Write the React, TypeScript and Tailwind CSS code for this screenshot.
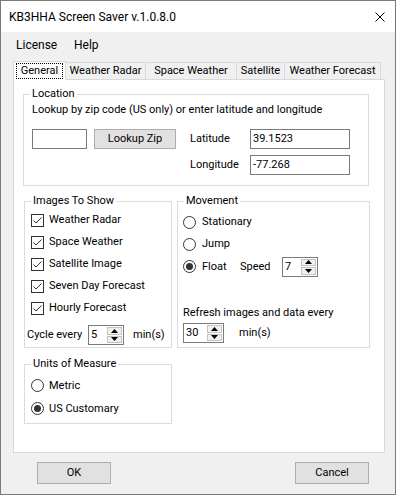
import React from 'react'

function CheckBox({ label }: { label: string }) {
  return (
    <div className="flex h-[22px] items-center pl-[6px]">
      <div className="flex h-[13px] w-[13px] items-center justify-center border border-[#333] bg-white">
        <svg width="11" height="11" viewBox="0 0 11 11">
          <path d="M1.5 5.5 L4 8 L9.5 2.5" fill="none" stroke="#333" strokeWidth="1" />
        </svg>
      </div>
      <span className="ml-[5px]">{label}</span>
    </div>
  )
}

function Radio({ checked }: { checked?: boolean }) {
  return (
    <div className="flex h-[13px] w-[13px] shrink-0 items-center justify-center rounded-full border border-[#333] bg-white">
      {checked && <div className="h-[7px] w-[7px] rounded-full bg-[#333]" />}
    </div>
  )
}

function Spinner({ value, width }: { value: string; width: string }) {
  return (
    <div className={`flex h-[20px] shrink-0 border border-[#7a7a7a] bg-white ${width}`}>
      <span className="flex-1 pl-[2px] leading-[18px]">{value}</span>
      <div className="m-px flex w-[15px] flex-col gap-px">
        <div className="flex flex-1 items-center justify-center border border-[#c4c4c4] bg-[#f0f0f0]">
          <svg width="7" height="4" viewBox="0 0 7 4">
            <path d="M0 4 L3.5 0 L7 4 Z" fill="#000" />
          </svg>
        </div>
        <div className="flex flex-1 items-center justify-center border border-[#c4c4c4] bg-[#f0f0f0]">
          <svg width="7" height="4" viewBox="0 0 7 4">
            <path d="M0 0 L3.5 4 L7 0 Z" fill="#000" />
          </svg>
        </div>
      </div>
    </div>
  )
}

function TextBox({ value, width }: { value?: string; width: string }) {
  return (
    <div className={`h-[20px] shrink-0 border border-[#7a7a7a] bg-white pl-[2px] leading-[18px] ${width}`}>
      {value}
    </div>
  )
}

function Group({
  title,
  className,
  children,
}: {
  title: string
  className: string
  children: React.ReactNode
}) {
  return (
    <fieldset className={`m-0 min-w-0 border border-[#dcdcdc] p-0 ${className}`}>
      <legend className="ml-[6px] px-[2px] leading-[16px]">{title}</legend>
      {children}
    </fieldset>
  )
}

const tabs = [
  { name: 'Weather Radar', w: 'w-[81px]' },
  { name: 'Space Weather', w: 'w-[92px]' },
  { name: 'Satellite', w: 'w-[49px]' },
  { name: 'Weather Forecast', w: 'w-[97px]' },
]

export default function App() {
  return (
    <div className="flex h-[495px] w-[396px] flex-col whitespace-nowrap border border-[#7a7a7a] bg-[#f0f0f0] font-['Roboto',Arial,sans-serif] text-[11px] leading-[16px] text-black">
      {/* title bar */}
      <div className="flex h-[31px] items-center justify-between bg-white pl-[8px] pr-[10px]">
        <span className="text-[12px]">KB3HHA Screen Saver v.1.0.8.0</span>
        <svg width="10" height="10" viewBox="0 0 10 10">
          <path d="M0.5 0.5 L9.5 9.5 M9.5 0.5 L0.5 9.5" stroke="#000" strokeWidth="1" />
        </svg>
      </div>

      {/* menu */}
      <div className="flex h-[25px] items-center pl-[15px] text-[12px]">
        <span className="w-[58px]">License</span>
        <span>Help</span>
      </div>

      {/* tabs */}
      <div className="mt-[4px] flex h-[18px] items-end pl-[12px]">
        <div className="relative z-10 -mb-px flex h-[19px] w-[53px] items-start justify-center border border-b-0 border-[#d9d9d9] bg-white pt-px">
          <span className="border border-dotted border-black px-[4px] leading-[14px]">General</span>
        </div>
        {tabs.map((t) => (
          <div
            key={t.name}
            className={`-ml-px flex h-[17px] items-center justify-center border border-b-0 border-[#d9d9d9] bg-[#f0f0f0] ${t.w}`}
          >
            {t.name}
          </div>
        ))}
      </div>

      {/* tab panel */}
      <div className="ml-[12px] flex h-[374px] w-[372px] flex-col border border-[#d9d9d9] bg-white">
        <Group title="Location" className="ml-[9px] mt-[6px] w-[346px] pb-[10px]">
          <div className="pl-[8px]">Lookup by zip code (US only) or enter latitude and longitude</div>
          <div className="mt-[11px] flex items-start pl-[8px]">
            <TextBox width="w-[55px]" />
            <div className="ml-[7px] flex h-[20px] w-[82px] items-center justify-center border border-[#adadad] bg-[#e1e1e1]">
              Lookup Zip
            </div>
            <div className="ml-[14px] flex flex-col gap-[6px]">
              <div className="flex h-[20px] items-center">
                <span className="w-[60px]">Latitude</span>
                <TextBox value="39.1523" width="w-[100px]" />
              </div>
              <div className="flex h-[20px] items-center">
                <span className="w-[60px]">Longitude</span>
                <TextBox value="-77.268" width="w-[100px]" />
              </div>
            </div>
          </div>
        </Group>

        <div className="mt-[7px] flex">
          <Group title="Images To Show" className="ml-[10px] w-[148px] pb-[2px]">
            <CheckBox label="Weather Radar" />
            <CheckBox label="Space Weather" />
            <CheckBox label="Satellite Image" />
            <CheckBox label="Seven Day Forecast" />
            <CheckBox label="Hourly Forecast" />
            <div className="mt-[6px] flex h-[20px] items-center pl-[2px]">
              <span className="w-[61px]">Cycle every</span>
              <Spinner value="5" width="w-[36px]" />
              <span className="ml-[9px]">min(s)</span>
            </div>
          </Group>

          <Group title="Movement" className="ml-[5px] w-[193px] pb-[4px] pt-[2px]">
            <div className="flex h-[22px] items-center pl-[5px]">
              <Radio />
              <span className="ml-[6px]">Stationary</span>
            </div>
            <div className="flex h-[22px] items-center pl-[5px]">
              <Radio />
              <span className="ml-[6px]">Jump</span>
            </div>
            <div className="flex h-[23px] items-center pl-[5px]">
              <Radio checked />
              <span className="ml-[6px] w-[38px]">Float</span>
              <span className="w-[42px]">Speed</span>
              <Spinner value="7" width="w-[36px]" />
            </div>
            <div className="mt-[27px] pl-[5px]">Refresh images and data every</div>
            <div className="mt-[2px] flex h-[20px] items-center pl-[5px]">
              <Spinner value="30" width="w-[41px]" />
              <span className="ml-[15px]">min(s)</span>
            </div>
          </Group>
        </div>

        <Group title="Units of Measure" className="ml-[10px] mt-[8px] w-[148px] pb-[3px] pt-[2px]">
          <div className="flex h-[23px] items-center pl-[6px]">
            <Radio />
            <span className="ml-[5px]">Metric</span>
          </div>
          <div className="flex h-[23px] items-center pl-[6px]">
            <Radio checked />
            <span className="ml-[5px]">US Customary</span>
          </div>
        </Group>
      </div>

      {/* buttons */}
      <div className="mt-[9px] flex justify-between pl-[36px] pr-[26px]">
        <div className="flex h-[22px] w-[74px] items-center justify-center border border-[#adadad] bg-[#e1e1e1]">OK</div>
        <div className="flex h-[22px] w-[74px] items-center justify-center border border-[#adadad] bg-[#e1e1e1]">Cancel</div>
      </div>
    </div>
  )
}
